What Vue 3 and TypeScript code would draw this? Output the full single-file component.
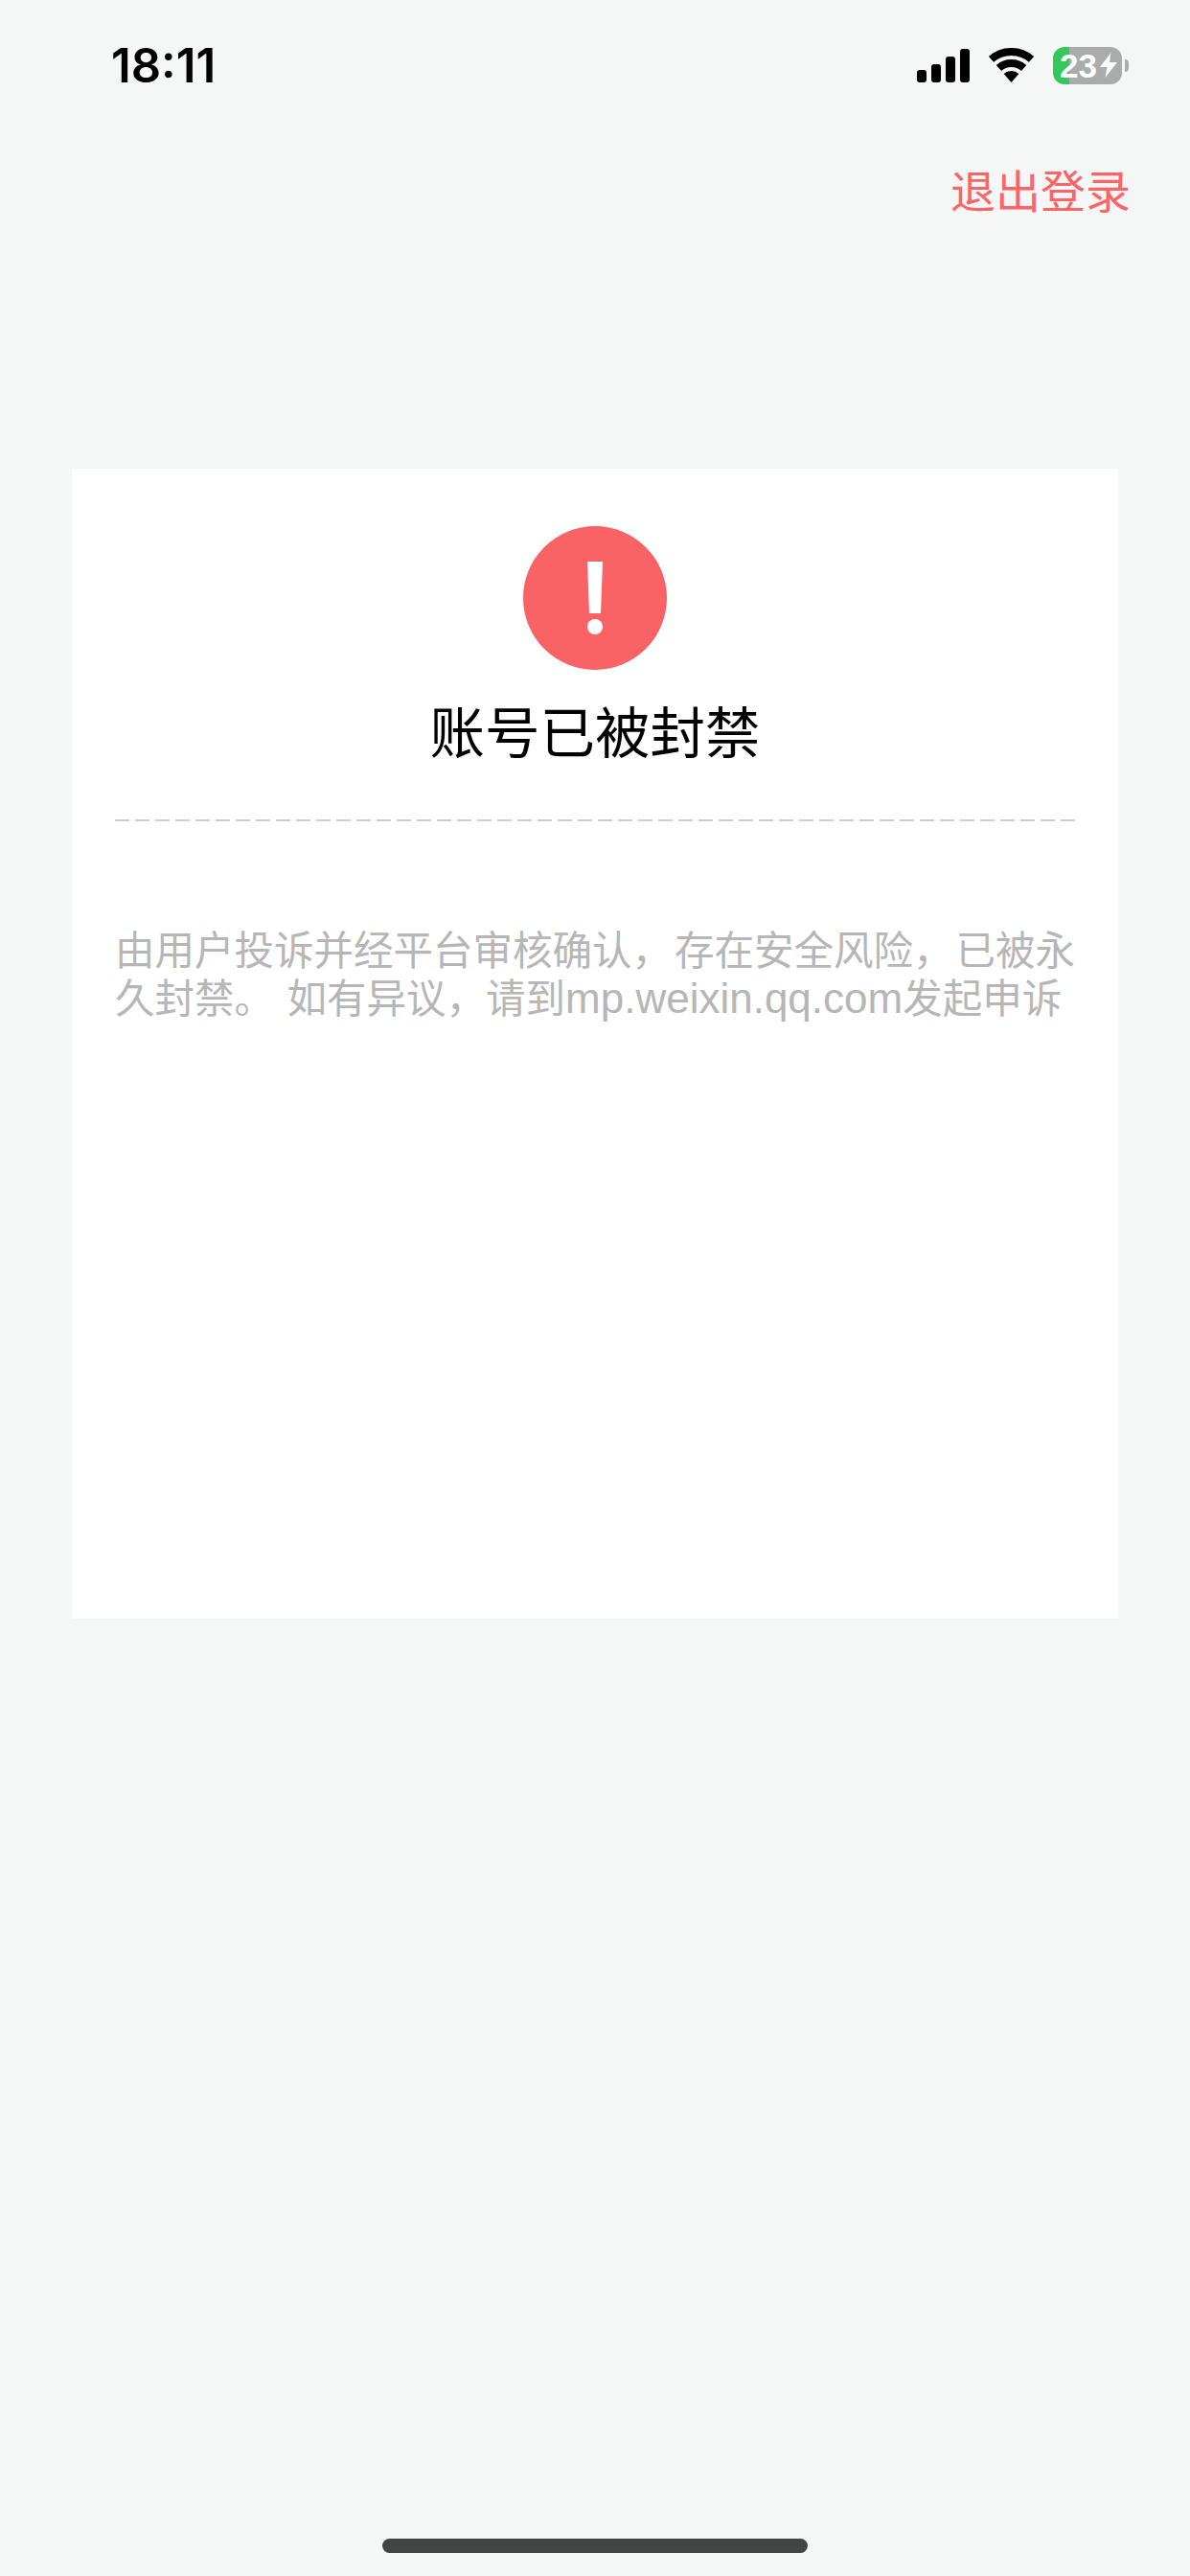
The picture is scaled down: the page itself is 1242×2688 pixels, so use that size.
<script setup lang="ts">
const bars: number[] = [13, 19, 27, 35]
</script>

<template>
  <div class="page">
    <div class="status">
      <span class="time">18:11</span>
      <div class="indicators">
        <div class="signal">
          <i v-for="h in bars" :key="h" class="bar" :style="{ height: h + 'px' }"></i>
        </div>
        <svg class="wifi" width="47" height="36" viewBox="0 0 47 36">
          <path d="M2.5 11.85A32 32 0 0 1 44.5 11.85" fill="none" stroke="#000" stroke-width="8" />
          <path d="M10.4 20.9A20 20 0 0 1 36.6 20.9" fill="none" stroke="#000" stroke-width="8" />
          <path d="M23.5 36L15.63 26.94A12 12 0 0 1 31.37 26.94Z" fill="#000" />
        </svg>
        <div class="battery">
          <div class="cell">
            <span class="level">23</span>
            <svg width="18" height="26" viewBox="0 0 18 26">
              <path d="M11.5 0L0 15H7.5L5.5 26L18 10H10Z" fill="#fff" />
            </svg>
          </div>
          <i class="nub"></i>
        </div>
      </div>
    </div>

    <div class="actions">
      <span class="logout">退出登录</span>
    </div>

    <section class="card">
      <svg class="alert" width="150" height="150" viewBox="0 0 150 150">
        <circle cx="75" cy="75" r="75" fill="#fa6365" />
        <path d="M67 37H83L81 91H69Z" fill="#fff" />
        <circle cx="75" cy="105" r="8" fill="#fff" />
      </svg>
      <h1 class="title">账号已被封禁</h1>
      <div class="divider"></div>
      <p class="desc">由用户投诉并经平台审核确认<span class="comma">，</span>存在安全风险<span class="comma">，</span>已被永久封禁<span class="stop">。</span> 如有异议，请到<span class="latin">mp.weixin.qq.com</span>发起申诉</p>
    </section>

    <div class="home"></div>
  </div>
</template>

<style scoped>
.page {
  display: flex;
  flex-direction: column;
  height: 2688px;
  background: #f5f7f6;
  font-family: "Liberation Sans", "Noto Sans CJK SC", sans-serif;
  overflow: hidden;
}
.status {
  display: flex;
  align-items: center;
  justify-content: space-between;
  height: 136px;
  padding: 0 64px 0 116px;
}
.time {
  font-family: Inter, sans-serif;
  font-size: 49px;
  font-weight: 600;
  color: #000;
}
.indicators {
  display: flex;
  align-items: center;
}
.signal {
  display: flex;
  align-items: flex-end;
  gap: 5px;
  height: 35px;
  margin-right: 20px;
}
.bar {
  display: block;
  width: 10px;
  border-radius: 3px;
  background: #000;
}
.wifi {
  display: block;
  margin-right: 20px;
}
.battery {
  display: flex;
  align-items: center;
  gap: 3px;
}
.cell {
  display: flex;
  align-items: center;
  justify-content: flex-end;
  gap: 3px;
  box-sizing: border-box;
  width: 72px;
  height: 39px;
  padding-right: 5px;
  border-radius: 12px;
  background: linear-gradient(to right, #34c759 17px, #a9acab 17px);
}
.level {
  font-family: "Liberation Sans", sans-serif;
  font-size: 35px;
  font-weight: 700;
  line-height: 39px;
  color: #fff;
}
.nub {
  display: block;
  width: 4px;
  height: 13px;
  border-radius: 0 5px 5px 0;
  background: #a9acab;
}
.actions {
  display: flex;
  justify-content: flex-end;
  padding: 32px 62px 0 0;
  margin-bottom: 255px;
}
.logout {
  font-size: 47px;
  line-height: 66px;
  color: #fc6467;
}
.card {
  display: flex;
  flex-direction: column;
  align-items: center;
  box-sizing: border-box;
  height: 1200px;
  margin: 0 75px;
  padding-top: 60px;
  background: #fff;
}
.alert {
  display: block;
  flex: none;
}
.title {
  margin: 27px 0 0;
  font-size: 57.5px;
  font-weight: 400;
  line-height: 80px;
  color: #000;
}
.divider {
  align-self: stretch;
  height: 2px;
  margin: 49px 45px 0;
  background: repeating-linear-gradient(to right, #cfcfcf 0 15px, transparent 15px 21px);
}
.desc {
  align-self: stretch;
  margin: 111px 36px 0 45px;
  font-size: 41.5px;
  line-height: 50px;
  color: #b6b6b6;
}
.comma {
  letter-spacing: 3px;
}
.stop {
  letter-spacing: 2px;
}
.latin {
  font-size: 44px;
  line-height: 0;
}
.home {
  align-self: center;
  width: 444px;
  height: 15px;
  margin-top: auto;
  margin-bottom: 24px;
  border-radius: 8px;
  background: #444;
}
</style>
